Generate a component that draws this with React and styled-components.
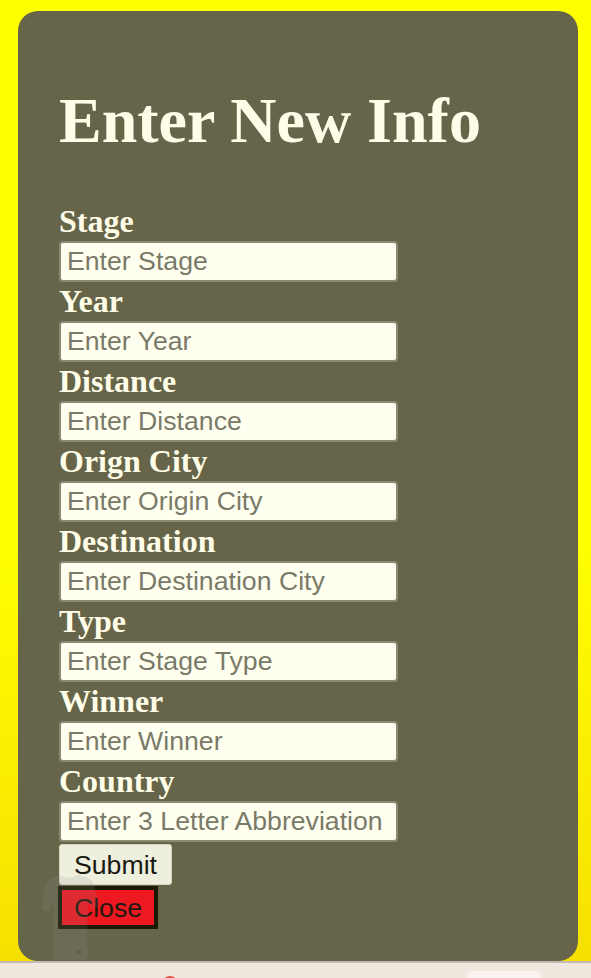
import React from "react";
import styled, { createGlobalStyle } from "styled-components";

const Global = createGlobalStyle`
  html, body { margin: 0; padding: 0; }
  body {
    width: 591px;
    height: 978px;
    overflow: hidden;
    background: linear-gradient(#ffff00 0%, #ffff00 55%, #f6de00 100%);
  }
`;

const Page = styled.div`
  display: flex;
  flex-direction: column;
  height: 978px;
`;

const Stage = styled.div`
  flex: 1;
  display: flex;
  padding: 11px 13px 0 18px;
`;

const Panel = styled.form`
  position: relative;
  flex: 1;
  display: flex;
  flex-direction: column;
  align-items: flex-start;
  background: #666549;
  border-radius: 20px;
  padding: 74px 40px 0 41px;
  box-sizing: border-box;
`;

const Heading = styled.h1`
  margin: 0 0 45px;
  font-family: "Liberation Serif", "Times New Roman", serif;
  font-weight: 700;
  font-size: 64px;
  line-height: 72px;
  color: #fffde8;
`;

const Label = styled.label`
  display: block;
  font-family: "Liberation Serif", "Times New Roman", serif;
  font-weight: 700;
  font-size: 32px;
  line-height: 39px;
  height: 39px;
  color: #fffde8;
`;

const Input = styled.input`
  box-sizing: border-box;
  width: 339px;
  height: 41px;
  margin: 0;
  padding: 0 6px;
  border: 2px solid #8a8a72;
  border-radius: 4px;
  background: #fffff0;
  font-family: "Liberation Sans", Arial, sans-serif;
  font-size: 26.67px;
  color: #222;
  outline: none;
  &::placeholder { color: #7a7a68; opacity: 1; }
`;

const Button = styled.button`
  position: relative;
  z-index: 1;
  box-sizing: border-box;
  margin: ${(p) => p.$mt || 0}px 0 0 ${(p) => p.$ml || 0}px;
  font-family: "Liberation Sans", Arial, sans-serif;
  font-size: 26.67px;
  line-height: 30px;
  cursor: pointer;
  color: #1a1a10;
  background: ${(p) => (p.$danger ? "#ee1820" : "#efefde")};
  border: ${(p) => (p.$danger ? "4px solid #1a1a05" : "1px solid #d4d4c0")};
  border-radius: ${(p) => (p.$danger ? "0" : "3px")};
  width: ${(p) => p.$w}px;
  height: ${(p) => p.$h}px;
  padding: 0;
`;

const Jersey = styled.svg`
  position: absolute;
  left: 22px;
  top: 861px;
  z-index: 2;
  pointer-events: none;
`;

const BottomBar = styled.div`
  height: 17px;
  flex-shrink: 0;
  box-sizing: border-box;
  border-top: 2px solid #c2bbb3;
  background: #f0e7df;
  display: flex;
  align-items: flex-start;
  overflow: hidden;
`;

const Dot = styled.span`
  display: block;
  width: 16px;
  height: 16px;
  border-radius: 50%;
  background: #d9534a;
  margin: 13px 0 0 162px;
`;

const Pill = styled.span`
  display: block;
  width: 74px;
  height: 20px;
  border-radius: 6px;
  background: #f8f3ee;
  margin: 8px 50px 0 auto;
`;

const fields = [
  ["Stage", "Enter Stage"],
  ["Year", "Enter Year"],
  ["Distance", "Enter Distance"],
  ["Orign City", "Enter Origin City"],
  ["Destination", "Enter Destination City"],
  ["Type", "Enter Stage Type"],
  ["Winner", "Enter Winner"],
  ["Country", "Enter 3 Letter Abbreviation"],
];

export default function App() {
  return (
    <>
      <Global />
      <Page>
        <Stage>
          <Panel onSubmit={(e) => e.preventDefault()}>
            <Heading>Enter New Info</Heading>
            {fields.map(([label, ph]) => (
              <React.Fragment key={label}>
                <Label>{label}</Label>
                <Input placeholder={ph} />
              </React.Fragment>
            ))}
            <Button type="submit" $mt={2} $w={113} $h={41}>Submit</Button>
            <Button type="button" $danger $mt={1} $ml={-1} $w={100} $h={43}>Close</Button>
            <Jersey width="60" height="90" viewBox="0 0 60 90">
              <path
                d="M20 3 Q29 9 38 3 L50 7 Q56 12 58 34 L52 38 L48 30 L47 88 L14 88 L13 30 L9 40 L2 37 Q3 12 9 7 Z"
                fill="#8c8c8c"
                opacity="0.16"
              />
              <circle cx="39" cy="80" r="2.5" fill="#444" opacity="0.3" />
            </Jersey>
          </Panel>
        </Stage>
        <BottomBar>
          <Dot />
          <Pill />
        </BottomBar>
      </Page>
    </>
  );
}
